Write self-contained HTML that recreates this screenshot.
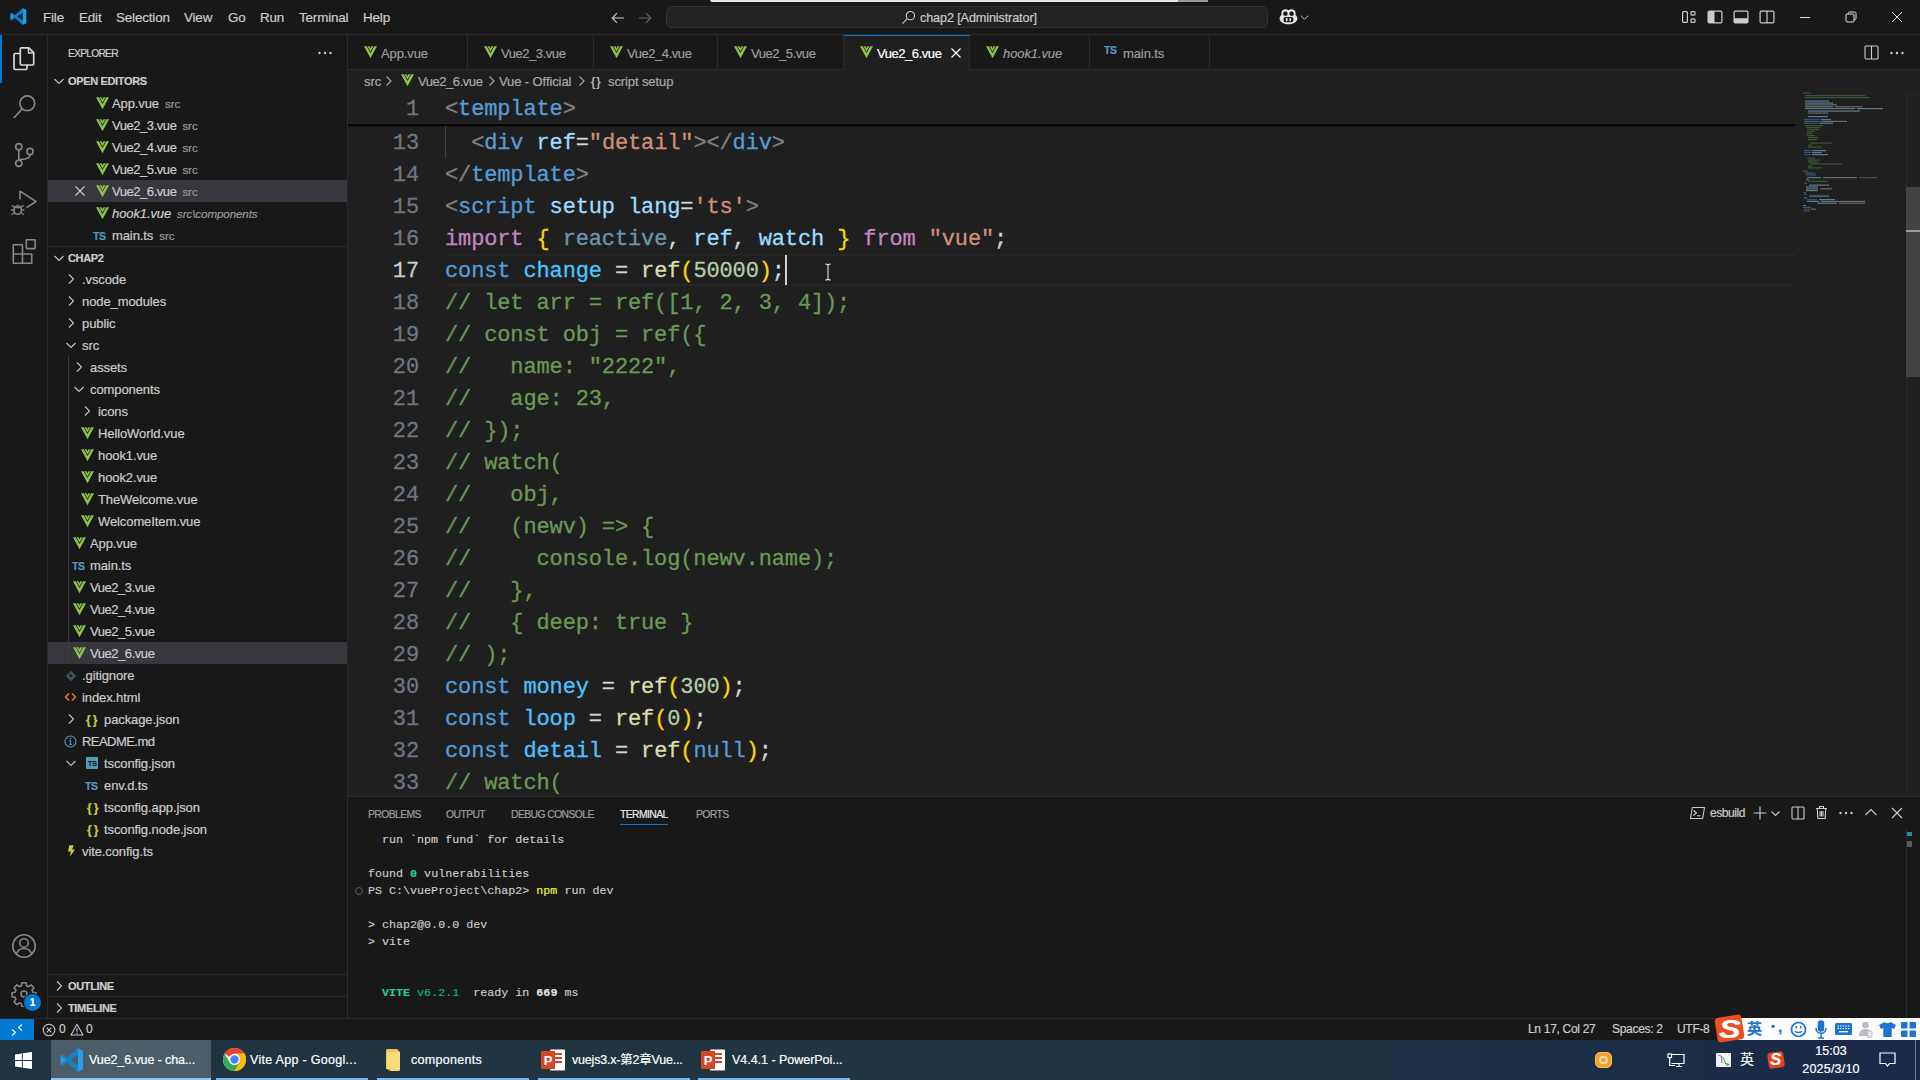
<!DOCTYPE html>
<html lang="en">
<head>
<meta charset="utf-8">
<title>Vue2_6.vue - chap2 - Visual Studio Code</title>
<style>
*{box-sizing:border-box;margin:0;padding:0}
html,body{width:1920px;height:1080px;overflow:hidden;background:#1f1f1f}
body{position:relative;font-family:"Liberation Sans","Noto Sans CJK SC",sans-serif;font-size:13px;color:#ccc;-webkit-font-smoothing:antialiased;-webkit-text-stroke:.2px}
.abs{position:absolute}
svg{display:block}
/* ---------- title bar ---------- */
#titlebar{position:absolute;left:0;top:0;width:1920px;height:35px;background:#181818;border-bottom:1px solid #2b2b2b}
#titlebar .menu{position:absolute;top:1px;height:34px;line-height:34px;font-size:13.4px;color:#ccc;white-space:nowrap;letter-spacing:-0.15px}
#cmdcenter{position:absolute;left:666px;top:6px;width:602px;height:22px;border:1px solid #333;border-radius:6px;background:#222}
#cmdcenter span{position:absolute;left:293px;top:1px;line-height:20px;font-size:12.6px;color:#ccc;white-space:nowrap;letter-spacing:-0.1px}
/* ---------- activity bar ---------- */
#activity{position:absolute;left:0;top:35px;width:48px;height:983px;background:#181818;border-right:1px solid #2b2b2b}
/* ---------- side bar ---------- */
#sidebar{position:absolute;left:48px;top:35px;width:300px;height:983px;background:#181818;border-right:1px solid #2b2b2b;overflow:hidden}
.row{position:absolute;left:0;width:299px;height:22px;line-height:22px;white-space:nowrap;font-size:13px;color:#ccc;letter-spacing:-0.1px}
.row .t{position:absolute;top:1px}
.row .d{font-size:11.6px;color:#999;margin-left:6px;letter-spacing:-0.1px}
.row svg{position:absolute}
.hdr{position:absolute;left:0;width:299px;height:22px;line-height:22px;font-size:11px;font-weight:bold;color:#ccc;white-space:nowrap}
.hdr .t{position:absolute;left:20px;top:0;letter-spacing:-0.35px}
.sel{background:#37373d}
/* ---------- editor ---------- */
#tabs{position:absolute;left:348px;top:35px;width:1572px;height:35px;background:#181818;border-bottom:1px solid #2b2b2b}
.tab{position:absolute;top:0;height:35px;border-right:1px solid #2b2b2b;line-height:35px;font-size:13px;color:#9d9d9d;white-space:nowrap;letter-spacing:-0.1px}
.tab svg{position:absolute}
.tab .t{position:absolute;top:1px}
.tab.act{background:#1f1f1f;color:#fff;border-top:1px solid #0078d4;height:36px;line-height:33px}
#crumbs{position:absolute;left:348px;top:70px;width:1572px;height:22px;line-height:22px;font-size:13px;color:#a9a9a9;white-space:nowrap;letter-spacing:-0.1px}
#crumbs .t{position:absolute;top:1px}
#crumbs svg{position:absolute}
#editor{position:absolute;left:348px;top:92px;width:1572px;height:704px;background:#1f1f1f;overflow:hidden}
.ln{position:absolute;left:0;width:1440px;height:32px;line-height:32px;white-space:pre;font-family:"Liberation Mono","DejaVu Sans Mono",monospace;font-size:22px;letter-spacing:-0.132px;-webkit-text-stroke:.3px}
.ln .n{position:absolute;left:0;top:2px;width:71px;text-align:right;color:#6e7681}
.ln .c{position:absolute;left:97px;top:2px;color:#d4d4d4}
.k{color:#569cd6}.p{color:#808080}.a{color:#9cdcfe}.s{color:#ce9178}.i{color:#c586c0}.y{color:#ffd700}.f{color:#dcdcaa}.v{color:#4fc1ff}.m{color:#b5cea8}.g{color:#6a9955}.u{color:#9cdcfe;opacity:.62}
/* ---------- panel ---------- */
#panel{position:absolute;left:348px;top:796px;width:1572px;height:222px;background:#181818;border-top:1px solid #2b2b2b;overflow:hidden}
.ptab{position:absolute;top:7px;height:21px;line-height:22px;font-size:10.400px;color:#9d9d9d;white-space:nowrap;letter-spacing:-.6px}
.tl{position:absolute;left:20px;-webkit-text-stroke:.15px;height:17px;line-height:17px;white-space:pre;font-family:"Liberation Mono","DejaVu Sans Mono",monospace;font-size:11.7px;color:#ccc}
/* ---------- status bar ---------- */
#status{position:absolute;left:0;top:1018px;width:1920px;height:22px;background:#181818;border-top:1px solid #2b2b2b;line-height:21px;font-size:12px;color:#ccc;white-space:nowrap}
#status .t{position:absolute;top:0;letter-spacing:-.3px}
/* ---------- taskbar ---------- */
#taskbar{position:absolute;left:0;top:1040px;width:1920px;height:40px;background:linear-gradient(90deg,#1f3440 0%,#203540 45%,#1e3142 70%,#19294a 100%);font-size:12px;color:#fff;white-space:nowrap}
.tb{position:absolute;top:0;height:40px;width:160px}
.tb .t{position:absolute;left:38px;top:1px;line-height:38px;font-size:12.500px;color:#fff;letter-spacing:.3px}
.tb .bar{position:absolute;left:0;right:0;bottom:0;height:2px;background:#76b9ed}
</style>
</head>
<body>
<!-- TITLEBAR -->
<div id="titlebar">
<svg class="abs" style="left:10px;top:8px" width="17" height="17" viewBox="0 0 100 100"><path d="M96 11 75 1 29 43 10 28 2 32v36l8 4 19-15 46 42 21-10z" fill="#1f9cf0"/><path d="M75 1 29 43 10 28 2 32l22 18L2 68l8 4 19-15 46 42z" fill="#0a79cf"/><path d="M75 28 45 50l30 22z" fill="#181818"/></svg>
<span class="menu" style="left:43px">File</span>
<span class="menu" style="left:79px">Edit</span>
<span class="menu" style="left:116px">Selection</span>
<span class="menu" style="left:184px">View</span>
<span class="menu" style="left:228px">Go</span>
<span class="menu" style="left:260px">Run</span>
<span class="menu" style="left:299px">Terminal</span>
<span class="menu" style="left:363px">Help</span>
<svg class="abs" style="left:610px;top:10px" width="16" height="16" viewBox="0 0 16 16" fill="none" stroke="#ccc" stroke-width="1.1"><path d="M14 8H2.5M7 3.2 2.2 8 7 12.8"/></svg>
<svg class="abs" style="left:637px;top:10px" width="16" height="16" viewBox="0 0 16 16" fill="none" stroke="#6b6b6b" stroke-width="1.1"><path d="M2 8h11.5M9 3.2 13.8 8 9 12.8"/></svg>
<div class="abs" style="left:710px;top:0;width:498px;height:2px;background:#e8e8e8;border-radius:0 0 3px 3px"></div>
<div class="abs" style="left:1178px;top:0;width:30px;height:2px;background:#999"></div>
<div id="cmdcenter"><svg class="abs" style="left:234px;top:3px" width="15" height="15" viewBox="0 0 16 16" fill="none" stroke="#ccc" stroke-width="1.2"><circle cx="10" cy="6" r="4.4"/><path d="M6.8 9.2 1.5 14.5"/></svg><span style="left:253px">chap2 [Administrator]</span></div>
<svg class="abs" style="left:1279px;top:9px" width="19" height="16" viewBox="0 0 19 16"><path d="M9.5 1.2C8.2.2 5.6-.1 3.9 1 2.3 2.1 2.2 4.3 2.5 5.8 1.3 6.9.6 8.300.6 9.600c0 1.6 1.1 3.200 3.200 4.300 1.600.800 3.600 1.300 5.700 1.300s4.100-.5 5.700-1.300c2.100-1.100 3.200-2.700 3.200-4.300 0-1.300-.7-2.700-1.900-3.800.3-1.500.2-3.700-1.400-4.800C13.400-.1 10.800.2 9.500 1.200z" fill="#e6e6e6"/><rect x="4.300" y="2.500" width="4.200" height="4.200" rx="1.500" fill="#181818"/><rect x="10.500" y="2.500" width="4.200" height="4.200" rx="1.500" fill="#181818"/><rect x="4.600" y="8" width="9.800" height="5.200" rx="1.800" fill="#181818"/><rect x="6.900" y="9" width="1.700" height="3.200" rx=".6" fill="#e6e6e6"/><rect x="10.400" y="9" width="1.700" height="3.200" rx=".6" fill="#e6e6e6"/></svg>
<svg class="abs" style="left:1300px;top:14px" width="9" height="7.400" viewBox="0 0 11 9" fill="none" stroke="#ccc" stroke-width="1.100"><path d="M1 2l4.500 4.500L10 2"/></svg>
<svg class="abs" style="left:1681px;top:10px" width="16" height="14" viewBox="0 0 16 14" fill="none" stroke="#ccc" stroke-width="1.200"><rect x="1.600" y="1.600" width="4.800" height="10.800" rx="1"/><rect x="10" y="1.600" width="4" height="3.600" rx="1"/><rect x="10" y="8.800" width="4" height="3.600" rx="1"/></svg>
<svg class="abs" style="left:1707px;top:10px" width="16" height="14" viewBox="0 0 16 14"><rect x="1.100" y="1.100" width="13.800" height="11.800" rx="1.200" fill="none" stroke="#ccc" stroke-width="1.200"/><rect x="1.100" y="1.100" width="6.400" height="11.800" fill="#ccc"/></svg>
<svg class="abs" style="left:1733px;top:10px" width="16" height="14" viewBox="0 0 16 14"><rect x="1.100" y="1.100" width="13.800" height="11.800" rx="1.200" fill="none" stroke="#ccc" stroke-width="1.200"/><rect x="1.100" y="8.200" width="13.800" height="4.700" fill="#ccc"/></svg>
<svg class="abs" style="left:1759px;top:10px" width="16" height="14" viewBox="0 0 16 14" fill="none" stroke="#ccc" stroke-width="1.200"><rect x="1.100" y="1.100" width="13.800" height="11.800" rx="1.200"/><path d="M8 1.100v11.800"/></svg>
<svg class="abs" style="left:1799px;top:11px" width="12" height="12" viewBox="0 0 12 12" stroke="#ddd" stroke-width="1"><path d="M1 6.500h10"/></svg>
<svg class="abs" style="left:1845px;top:11px" width="12" height="12" viewBox="0 0 12 12" fill="none" stroke="#ddd" stroke-width="1"><rect x="1" y="3" width="8" height="8" rx="1"/><path d="M3.300 3V2.200c0-.7.500-1.200 1.200-1.200h5.300c.7 0 1.200.5 1.200 1.200v5.300c0 .7-.5 1.200-1.200 1.200H9"/></svg>
<svg class="abs" style="left:1891px;top:11px" width="12" height="12" viewBox="0 0 12 12" stroke="#ddd" stroke-width="1"><path d="M1 1l10 10M11 1 1 11"/></svg>
</div>
<!-- ACTIVITY -->
<div id="activity">
<div class="abs" style="left:0;top:0;width:2px;height:48px;background:#0078d4"></div>
<svg class="abs" style="left:12px;top:11px" width="24" height="26" viewBox="0 0 24 26" fill="none" stroke="#d7d7d7" stroke-width="1.700" stroke-linejoin="round"><path d="M8.300 7.500H3.200a1.200 1.200 0 0 0-1.200 1.200v13.600a1.200 1.200 0 0 0 1.200 1.200h10.600a1.200 1.200 0 0 0 1.200-1.200V19"/><path d="M9.500 1.800h7.300L21.700 6.700v11.100a1.200 1.200 0 0 1-1.200 1.200H9.500a1.200 1.200 0 0 1-1.200-1.200V3a1.200 1.200 0 0 1 1.200-1.200z"/><path d="M16.500 2v5h5" stroke-width="1.400"/></svg>
<svg class="abs" style="left:11px;top:58px" width="26" height="28" viewBox="0 0 26 28" fill="none" stroke="#868686" stroke-width="1.700"><circle cx="16.300" cy="10.300" r="7.400"/><path d="M11.300 15.800 2.800 25"/></svg>
<svg class="abs" style="left:12px;top:105px" width="26" height="28" viewBox="0 0 26 28" fill="none" stroke="#868686" stroke-width="1.600"><circle cx="6.800" cy="6.700" r="3.100"/><circle cx="6.800" cy="23.300" r="3.100"/><circle cx="18" cy="11.500" r="3.100"/><path d="M6.800 9.800v10.400M18 14.600c0 3.400-3.600 4.600-7 4.600-2.300 0-4.200.3-4.200 1.600"/></svg>
<svg class="abs" style="left:9px;top:152px" width="30" height="30" viewBox="0 0 30 30" fill="none" stroke="#868686" stroke-width="1.600" stroke-linejoin="round"><path d="M11 12.500V4.200L27 14.500l-9.500 6.200"/><ellipse cx="8.700" cy="23" rx="3.700" ry="4.300"/><path d="M5.500 20.700h6.400M2 23h3M12.400 23h3M2.800 18.200l2.800 2.200M14.600 18.200l-2.800 2.200M2.800 27.800l2.800-2.300M14.600 27.800l-2.800-2.300M8.700 18.700v-1" stroke-width="1.300"/></svg>
<svg class="abs" style="left:11px;top:202px" width="26" height="28" viewBox="0 0 26 28" fill="none" stroke="#868686" stroke-width="1.600" stroke-linejoin="round"><path d="M2.300 7.800h9.200v18.400H2.300zM2.300 17h18.400v9.200H2.300M20.700 17v9.200H11.500"/><rect x="15.300" y="2.800" width="8.800" height="8.800" rx=".6"/></svg>
<svg class="abs" style="left:11px;top:898px" width="26" height="26" viewBox="0 0 26 26" fill="none" stroke="#868686" stroke-width="1.600"><circle cx="13" cy="13" r="11.200"/><circle cx="13" cy="10" r="4.300"/><path d="M5.300 21c1.300-3.700 4.200-5.500 7.700-5.500s6.400 1.800 7.700 5.500"/></svg>
<svg class="abs" style="left:11px;top:946px" width="26" height="26" viewBox="0 0 26 26" fill="none" stroke="#868686" stroke-width="1.600" stroke-linejoin="round"><path d="M11 1.800h4l.6 3.100 1.900.8 2.600-1.800 2.800 2.800-1.800 2.600.8 1.900 3.100.6v4l-3.100.6-.8 1.900 1.800 2.600-2.800 2.800-2.600-1.800-1.900.8-.6 3.100h-4l-.6-3.100-1.900-.8-2.600 1.800-2.800-2.800 1.800-2.600-.8-1.900L1 15.800v-4l3.100-.6.800-1.900L3.100 6.700l2.800-2.800 2.600 1.800 1.900-.8z"/><circle cx="13" cy="13" r="3"/></svg>
<div class="abs" style="left:24px;top:959px;width:17px;height:17px;border-radius:9px;background:#0078d4;color:#fff;font-size:10px;font-weight:bold;line-height:17px;text-align:center;box-shadow:0 0 0 1px #181818">1</div>
</div>
<!-- SIDEBAR -->
<div id="sidebar">
<span class="abs" style="left:20px;top:0;line-height:35px;font-size:10.400px;color:#ccc;letter-spacing:-.85px;top:1px" id="expl">EXPLORER</span>
<svg class="abs" style="left:269px;top:14px" width="16" height="8" viewBox="0 0 16 8" fill="#ccc"><circle cx="2.500" cy="4" r="1.200"/><circle cx="8" cy="4" r="1.200"/><circle cx="13.500" cy="4" r="1.200"/></svg>
<div class="hdr" style="top:35px"><svg style="position:absolute;left:3px;top:3px" width="16" height="16" viewBox="0 0 16 16" fill="none" stroke="#c5c5c5" stroke-width="1.100"><path d="M3.500 6l4.500 4.500L12.500 6"/></svg><span class="t">OPEN EDITORS</span></div>
<div class="row" style="top:57px"><svg style="left:48px;top:5px" width="13" height="13" viewBox="0 0 13 13"><path d="M0 .3h2.700L6.500 7 10.300.3H13L6.500 12.300z" fill="#8dc149"/><path d="M3.500.3h2L6.500 2.200 7.500.3h2L6.500 5.600z" fill="#8dc149"/></svg><span class="t" style="left:64px">App.vue<span class="d">src</span></span></div>
<div class="row" style="top:79px"><svg style="left:48px;top:5px" width="13" height="13" viewBox="0 0 13 13"><path d="M0 .3h2.700L6.500 7 10.300.3H13L6.500 12.300z" fill="#8dc149"/><path d="M3.500.3h2L6.500 2.200 7.500.3h2L6.500 5.600z" fill="#8dc149"/></svg><span class="t" style="left:64px"><span style="letter-spacing:-.45px">Vue2_3.vue</span><span class="d">src</span></span></div>
<div class="row" style="top:101px"><svg style="left:48px;top:5px" width="13" height="13" viewBox="0 0 13 13"><path d="M0 .3h2.700L6.500 7 10.300.3H13L6.500 12.300z" fill="#8dc149"/><path d="M3.500.3h2L6.500 2.200 7.500.3h2L6.500 5.600z" fill="#8dc149"/></svg><span class="t" style="left:64px"><span style="letter-spacing:-.45px">Vue2_4.vue</span><span class="d">src</span></span></div>
<div class="row" style="top:123px"><svg style="left:48px;top:5px" width="13" height="13" viewBox="0 0 13 13"><path d="M0 .3h2.700L6.500 7 10.300.3H13L6.500 12.300z" fill="#8dc149"/><path d="M3.500.3h2L6.500 2.200 7.500.3h2L6.500 5.600z" fill="#8dc149"/></svg><span class="t" style="left:64px"><span style="letter-spacing:-.45px">Vue2_5.vue</span><span class="d">src</span></span></div>
<div class="row sel" style="top:145px"><svg style="left:27px;top:6px" width="10" height="10" viewBox="0 0 10 10" stroke="#ccc" stroke-width="1.100"><path d="M.5.5l9 9M9.500.5l-9 9"/></svg><svg style="left:48px;top:5px" width="13" height="13" viewBox="0 0 13 13"><path d="M0 .3h2.700L6.500 7 10.300.3H13L6.500 12.300z" fill="#8dc149"/><path d="M3.500.3h2L6.500 2.200 7.500.3h2L6.500 5.600z" fill="#8dc149"/></svg><span class="t" style="left:64px"><span style="letter-spacing:-.45px">Vue2_6.vue</span><span class="d">src</span></span></div>
<div class="row" style="top:167px"><svg style="left:48px;top:5px" width="13" height="13" viewBox="0 0 13 13"><path d="M0 .3h2.700L6.500 7 10.300.3H13L6.500 12.300z" fill="#8dc149"/><path d="M3.500.3h2L6.500 2.200 7.500.3h2L6.500 5.600z" fill="#8dc149"/></svg><span class="t" style="left:64px;font-style:italic">hook1.vue<span class="d">src\components</span></span></div>
<div class="row" style="top:189px"><span class="t" style="left:45px;font-size:10.500px;font-weight:bold;color:#519aba;letter-spacing:-.3px">TS</span><span class="t" style="left:64px">main.ts<span class="d">src</span></span></div>
<div class="hdr" style="top:211px;border-top:1px solid #2b2b2b"><svg style="position:absolute;left:3px;top:3px" width="16" height="16" viewBox="0 0 16 16" fill="none" stroke="#c5c5c5" stroke-width="1.100"><path d="M3.500 6l4.500 4.500L12.500 6"/></svg><span class="t">CHAP2</span></div>
<div class="row" style="top:233px"><svg style="left:15px;top:3px" width="16" height="16" viewBox="0 0 16 16" fill="none" stroke="#c5c5c5" stroke-width="1.100"><path d="M6 3.500l4.500 4.500L6 12.500"/></svg><span class="t" style="left:34px">.vscode</span></div>
<div class="row" style="top:255px"><svg style="left:15px;top:3px" width="16" height="16" viewBox="0 0 16 16" fill="none" stroke="#c5c5c5" stroke-width="1.100"><path d="M6 3.500l4.500 4.500L6 12.500"/></svg><span class="t" style="left:34px">node_modules</span></div>
<div class="row" style="top:277px"><svg style="left:15px;top:3px" width="16" height="16" viewBox="0 0 16 16" fill="none" stroke="#c5c5c5" stroke-width="1.100"><path d="M6 3.500l4.500 4.500L6 12.500"/></svg><span class="t" style="left:34px">public</span></div>
<div class="row" style="top:299px"><svg style="left:15px;top:3px" width="16" height="16" viewBox="0 0 16 16" fill="none" stroke="#c5c5c5" stroke-width="1.100"><path d="M3.500 6l4.500 4.500L12.500 6"/></svg><span class="t" style="left:34px">src</span></div>
<div class="row" style="top:321px"><svg style="left:23px;top:3px" width="16" height="16" viewBox="0 0 16 16" fill="none" stroke="#c5c5c5" stroke-width="1.100"><path d="M6 3.500l4.500 4.500L6 12.500"/></svg><span class="t" style="left:42px">assets</span></div>
<div class="row" style="top:343px"><svg style="left:23px;top:3px" width="16" height="16" viewBox="0 0 16 16" fill="none" stroke="#c5c5c5" stroke-width="1.100"><path d="M3.500 6l4.500 4.500L12.500 6"/></svg><span class="t" style="left:42px">components</span></div>
<div class="row" style="top:365px"><svg style="left:31px;top:3px" width="16" height="16" viewBox="0 0 16 16" fill="none" stroke="#c5c5c5" stroke-width="1.100"><path d="M6 3.500l4.500 4.500L6 12.500"/></svg><span class="t" style="left:50px">icons</span></div>
<div class="row" style="top:387px"><svg style="left:33px;top:5px" width="13" height="13" viewBox="0 0 13 13"><path d="M0 .3h2.700L6.500 7 10.300.3H13L6.500 12.300z" fill="#8dc149"/><path d="M3.500.3h2L6.500 2.200 7.500.3h2L6.500 5.600z" fill="#8dc149"/></svg><span class="t" style="left:50px">HelloWorld.vue</span></div>
<div class="row" style="top:409px"><svg style="left:33px;top:5px" width="13" height="13" viewBox="0 0 13 13"><path d="M0 .3h2.700L6.500 7 10.300.3H13L6.500 12.300z" fill="#8dc149"/><path d="M3.500.3h2L6.500 2.200 7.500.3h2L6.500 5.600z" fill="#8dc149"/></svg><span class="t" style="left:50px">hook1.vue</span></div>
<div class="row" style="top:431px"><svg style="left:33px;top:5px" width="13" height="13" viewBox="0 0 13 13"><path d="M0 .3h2.700L6.500 7 10.300.3H13L6.500 12.300z" fill="#8dc149"/><path d="M3.500.3h2L6.500 2.200 7.500.3h2L6.500 5.600z" fill="#8dc149"/></svg><span class="t" style="left:50px">hook2.vue</span></div>
<div class="row" style="top:453px"><svg style="left:33px;top:5px" width="13" height="13" viewBox="0 0 13 13"><path d="M0 .3h2.700L6.500 7 10.300.3H13L6.500 12.300z" fill="#8dc149"/><path d="M3.500.3h2L6.500 2.200 7.500.3h2L6.500 5.600z" fill="#8dc149"/></svg><span class="t" style="left:50px">TheWelcome.vue</span></div>
<div class="row" style="top:475px"><svg style="left:33px;top:5px" width="13" height="13" viewBox="0 0 13 13"><path d="M0 .3h2.700L6.500 7 10.300.3H13L6.500 12.300z" fill="#8dc149"/><path d="M3.500.3h2L6.500 2.200 7.500.3h2L6.500 5.600z" fill="#8dc149"/></svg><span class="t" style="left:50px">WelcomeItem.vue</span></div>
<div class="row" style="top:497px"><svg style="left:25px;top:5px" width="13" height="13" viewBox="0 0 13 13"><path d="M0 .3h2.700L6.500 7 10.300.3H13L6.500 12.300z" fill="#8dc149"/><path d="M3.500.3h2L6.500 2.200 7.500.3h2L6.500 5.600z" fill="#8dc149"/></svg><span class="t" style="left:42px">App.vue</span></div>
<div class="row" style="top:519px"><span class="t" style="left:24px;font-size:10.500px;font-weight:bold;color:#519aba;letter-spacing:-.3px">TS</span><span class="t" style="left:42px">main.ts</span></div>
<div class="row" style="top:541px"><svg style="left:25px;top:5px" width="13" height="13" viewBox="0 0 13 13"><path d="M0 .3h2.700L6.500 7 10.300.3H13L6.500 12.300z" fill="#8dc149"/><path d="M3.500.3h2L6.500 2.200 7.500.3h2L6.500 5.600z" fill="#8dc149"/></svg><span class="t" style="left:42px"><span style="letter-spacing:-.45px">Vue2_3.vue</span></span></div>
<div class="row" style="top:563px"><svg style="left:25px;top:5px" width="13" height="13" viewBox="0 0 13 13"><path d="M0 .3h2.700L6.500 7 10.300.3H13L6.500 12.300z" fill="#8dc149"/><path d="M3.500.3h2L6.500 2.200 7.500.3h2L6.500 5.600z" fill="#8dc149"/></svg><span class="t" style="left:42px"><span style="letter-spacing:-.45px">Vue2_4.vue</span></span></div>
<div class="row" style="top:585px"><svg style="left:25px;top:5px" width="13" height="13" viewBox="0 0 13 13"><path d="M0 .3h2.700L6.500 7 10.300.3H13L6.500 12.300z" fill="#8dc149"/><path d="M3.500.3h2L6.500 2.200 7.500.3h2L6.500 5.600z" fill="#8dc149"/></svg><span class="t" style="left:42px"><span style="letter-spacing:-.45px">Vue2_5.vue</span></span></div>
<div class="row sel" style="top:607px"><svg style="left:25px;top:5px" width="13" height="13" viewBox="0 0 13 13"><path d="M0 .3h2.700L6.500 7 10.300.3H13L6.500 12.300z" fill="#8dc149"/><path d="M3.500.3h2L6.500 2.200 7.500.3h2L6.500 5.600z" fill="#8dc149"/></svg><span class="t" style="left:42px"><span style="letter-spacing:-.45px">Vue2_6.vue</span></span></div>
<div class="row" style="top:629px"><svg style="left:16.500px;top:6px" width="12" height="12" viewBox="0 0 12 12"><path d="M6 .8 11.200 6 6 11.200.8 6z" fill="#41535b"/><circle cx="6" cy="6" r="1.300" fill="#181818"/><path d="M4.200 3.200 6 5" stroke="#181818" stroke-width="1"/></svg><span class="t" style="left:34px">.gitignore</span></div>
<div class="row" style="top:651px"><svg style="left:16px;top:5px" width="13" height="12" viewBox="0 0 13 12" fill="none" stroke="#e37933" stroke-width="1.500"><path d="M5 2.500 1.500 6 5 9.500M8 2.500 11.500 6 8 9.500"/></svg><span class="t" style="left:34px">index.html</span></div>
<div class="row" style="top:673px"><svg style="left:15px;top:3px" width="16" height="16" viewBox="0 0 16 16" fill="none" stroke="#c5c5c5" stroke-width="1.100"><path d="M6 3.500l4.500 4.500L6 12.500"/></svg><span class="t" style="left:38px;font-size:12px;font-weight:bold;color:#cbcb41;letter-spacing:2px">{}</span><span class="t" style="left:56px">package.json</span></div>
<div class="row" style="top:695px"><svg style="left:15.500px;top:5px" width="13" height="13" viewBox="0 0 13 13" fill="none" stroke="#519aba" stroke-width="1.100"><circle cx="6.500" cy="6.500" r="5.500"/><path d="M6.500 5.500v4M5.300 5.500h1.200M5.200 9.500h2.600" stroke-width="1.200"/><circle cx="6.500" cy="3.500" r=".8" fill="#519aba" stroke="none"/></svg><span class="t" style="left:34px"><span style="letter-spacing:-.55px">README.md</span></span></div>
<div class="row" style="top:717px"><svg style="left:15px;top:3px" width="16" height="16" viewBox="0 0 16 16" fill="none" stroke="#c5c5c5" stroke-width="1.100"><path d="M3.500 6l4.500 4.500L12.500 6"/></svg><svg style="left:38px;top:5px" width="12" height="12" viewBox="0 0 12 12"><rect width="12" height="12" rx="1" fill="#519aba"/></svg><span class="t" style="left:40px;font-size:7px;font-weight:bold;color:#181818;top:1px">TS</span><span class="t" style="left:56px">tsconfig.json</span></div>
<div class="row" style="top:739px"><span class="t" style="left:37px;font-size:10.500px;font-weight:bold;color:#519aba;letter-spacing:-.3px">TS</span><span class="t" style="left:56px">env.d.ts</span></div>
<div class="row" style="top:761px"><span class="t" style="left:39px;font-size:12px;font-weight:bold;color:#cbcb41;letter-spacing:2px">{}</span><span class="t" style="left:56px">tsconfig.app.json</span></div>
<div class="row" style="top:783px"><span class="t" style="left:39px;font-size:12px;font-weight:bold;color:#cbcb41;letter-spacing:2px">{}</span><span class="t" style="left:56px">tsconfig.node.json</span></div>
<div class="row" style="top:805px"><svg style="left:19px;top:4px" width="9" height="14" viewBox="0 0 10 14"><path d="M2.500.5h4.800L5.800 5.200h3L3.200 13.500 4.400 7.600H1.200z" fill="#cbcb41"/></svg><span class="t" style="left:34px">vite.config.ts</span></div>
<div class="abs" style="left:20px;top:321px;width:1px;height:308px;background:#3c3c3c"></div>
<div class="hdr" style="top:939px;border-top:1px solid #2b2b2b"><svg style="position:absolute;left:3px;top:3px" width="16" height="16" viewBox="0 0 16 16" fill="none" stroke="#c5c5c5" stroke-width="1.100"><path d="M6 3.500l4.500 4.500L6 12.500"/></svg><span class="t">OUTLINE</span></div>
<div class="hdr" style="top:961px;border-top:1px solid #2b2b2b"><svg style="position:absolute;left:3px;top:3px" width="16" height="16" viewBox="0 0 16 16" fill="none" stroke="#c5c5c5" stroke-width="1.100"><path d="M6 3.500l4.500 4.500L6 12.500"/></svg><span class="t">TIMELINE</span></div>
</div>
<!-- TABS -->
<div id="tabs">
<div class="tab" style="left:0px;width:120px"><svg style="left:16px;top:11px" width="13" height="13" viewBox="0 0 13 13"><path d="M0 .3h2.700L6.500 7 10.300.3H13L6.500 12.300z" fill="#8dc149"/><path d="M3.500.3h2L6.500 2.200 7.500.3h2L6.500 5.600z" fill="#8dc149"/></svg><span class="t" style="left:33px">App.vue</span></div>
<div class="tab" style="left:120px;width:126px"><svg style="left:16px;top:11px" width="13" height="13" viewBox="0 0 13 13"><path d="M0 .3h2.700L6.500 7 10.300.3H13L6.500 12.300z" fill="#8dc149"/><path d="M3.500.3h2L6.500 2.200 7.500.3h2L6.500 5.600z" fill="#8dc149"/></svg><span class="t" style="left:33px"><span style="letter-spacing:-.45px">Vue2_3.vue</span></span></div>
<div class="tab" style="left:246px;width:124px"><svg style="left:16px;top:11px" width="13" height="13" viewBox="0 0 13 13"><path d="M0 .3h2.700L6.500 7 10.300.3H13L6.500 12.300z" fill="#8dc149"/><path d="M3.500.3h2L6.500 2.200 7.500.3h2L6.500 5.600z" fill="#8dc149"/></svg><span class="t" style="left:33px"><span style="letter-spacing:-.45px">Vue2_4.vue</span></span></div>
<div class="tab" style="left:370px;width:126px"><svg style="left:16px;top:11px" width="13" height="13" viewBox="0 0 13 13"><path d="M0 .3h2.700L6.500 7 10.300.3H13L6.500 12.300z" fill="#8dc149"/><path d="M3.500.3h2L6.500 2.200 7.500.3h2L6.500 5.600z" fill="#8dc149"/></svg><span class="t" style="left:33px"><span style="letter-spacing:-.45px">Vue2_5.vue</span></span></div>
<div class="tab act" style="left:496px;width:126px"><svg style="left:16px;top:10px" width="13" height="13" viewBox="0 0 13 13"><path d="M0 .3h2.700L6.500 7 10.300.3H13L6.500 12.300z" fill="#8dc149"/><path d="M3.500.3h2L6.500 2.200 7.500.3h2L6.500 5.600z" fill="#8dc149"/></svg><span class="t" style="left:33px"><span style="letter-spacing:-.45px">Vue2_6.vue</span></span><svg style="left:107px;top:12px" width="10" height="10" viewBox="0 0 10 10" stroke="#fff" stroke-width="1.200"><path d="M.5.500l9 9M9.500.5l-9 9"/></svg></div>
<div class="tab" style="left:622px;width:120px"><svg style="left:16px;top:11px" width="13" height="13" viewBox="0 0 13 13"><path d="M0 .3h2.700L6.500 7 10.300.3H13L6.500 12.300z" fill="#8dc149"/><path d="M3.500.3h2L6.500 2.200 7.500.3h2L6.500 5.600z" fill="#8dc149"/></svg><span class="t" style="left:33px;font-style:italic">hook1.vue</span></div>
<div class="tab" style="left:742px;width:120px"><span class="t" style="left:14px;font-size:10.500px;font-weight:bold;color:#519aba;letter-spacing:-.3px;top:-2px">TS</span><span class="t" style="left:33px">main.ts</span></div>
<svg class="abs" style="left:1516px;top:10px" width="15" height="15" viewBox="0 0 15 15" fill="none" stroke="#ccc" stroke-width="1.100"><rect x="1" y="1" width="13" height="13" rx="1"/><path d="M7.500 1v13"/></svg>
<svg class="abs" style="left:1541px;top:14px" width="16" height="8" viewBox="0 0 16 8" fill="#ccc"><circle cx="2.500" cy="4" r="1.200"/><circle cx="8" cy="4" r="1.200"/><circle cx="13.500" cy="4" r="1.200"/></svg>
</div>
<!-- CRUMBS -->
<div id="crumbs">
<span class="t" style="left:16px">src</span>
<svg style="left:36px;top:5px" width="10" height="12" viewBox="0 0 10 12" fill="none" stroke="#a9a9a9" stroke-width="1.100"><path d="M2.500 1.500 7 6 2.500 10.500"/></svg>
<svg style="left:53px;top:4px" width="13" height="13" viewBox="0 0 13 13"><path d="M0 .3h2.700L6.500 7 10.300.3H13L6.500 12.300z" fill="#8dc149"/><path d="M3.500.3h2L6.500 2.200 7.500.3h2L6.500 5.600z" fill="#8dc149"/></svg>
<span class="t" style="left:70px"><span style="letter-spacing:-.45px">Vue2_6.vue</span></span>
<svg style="left:139px;top:5px" width="10" height="12" viewBox="0 0 10 12" fill="none" stroke="#a9a9a9" stroke-width="1.100"><path d="M2.500 1.500 7 6 2.500 10.500"/></svg>
<span class="t" style="left:151px">Vue - Official</span>
<svg style="left:229px;top:5px" width="10" height="12" viewBox="0 0 10 12" fill="none" stroke="#a9a9a9" stroke-width="1.100"><path d="M2.500 1.500 7 6 2.500 10.500"/></svg>
<span class="t" style="left:243px;color:#ccc;letter-spacing:.8px">{}</span>
<span class="t" style="left:260px">script setup</span>
</div>
<!-- EDITOR -->
<div id="editor">
<div class="abs" style="left:98px;top:162px;width:1349px;height:32px;border-top:2px solid #252525;border-bottom:2px solid #252525"></div>
<div class="abs" style="left:97px;top:34px;width:1px;height:32px;background:#404040"></div>
<div class="ln" style="top:34px"><span class="n">13</span><span class="c">  <span class="p">&lt;</span><span class="k">div</span> <span class="a">ref</span>=<span class="s">"detail"</span><span class="p">&gt;&lt;/</span><span class="k">div</span><span class="p">&gt;</span></span></div>
<div class="ln" style="top:66px"><span class="n">14</span><span class="c"><span class="p">&lt;/</span><span class="k">template</span><span class="p">&gt;</span></span></div>
<div class="ln" style="top:98px"><span class="n">15</span><span class="c"><span class="p">&lt;</span><span class="k">script</span> <span class="a">setup</span> <span class="a">lang</span>=<span class="s">'ts'</span><span class="p">&gt;</span></span></div>
<div class="ln" style="top:130px"><span class="n">16</span><span class="c"><span class="i">import</span> <span class="y">{</span> <span class="u">reactive</span>, <span class="a">ref</span>, <span class="a">watch</span> <span class="y">}</span> <span class="i">from</span> <span class="s">"vue"</span>;</span></div>
<div class="ln" style="top:162px"><span class="n" style="color:#ccc">17</span><span class="c"><span class="k">const</span> <span class="v">change</span> = <span class="f">ref</span><span class="y">(</span><span class="m">50000</span><span class="y">)</span>;</span></div>
<div class="ln" style="top:194px"><span class="n">18</span><span class="c"><span class="g">// let arr = ref([1, 2, 3, 4]);</span></span></div>
<div class="ln" style="top:226px"><span class="n">19</span><span class="c"><span class="g">// const obj = ref({</span></span></div>
<div class="ln" style="top:258px"><span class="n">20</span><span class="c"><span class="g">//   name: "2222",</span></span></div>
<div class="ln" style="top:290px"><span class="n">21</span><span class="c"><span class="g">//   age: 23,</span></span></div>
<div class="ln" style="top:322px"><span class="n">22</span><span class="c"><span class="g">// });</span></span></div>
<div class="ln" style="top:354px"><span class="n">23</span><span class="c"><span class="g">// watch(</span></span></div>
<div class="ln" style="top:386px"><span class="n">24</span><span class="c"><span class="g">//   obj,</span></span></div>
<div class="ln" style="top:418px"><span class="n">25</span><span class="c"><span class="g">//   (newv) =&gt; {</span></span></div>
<div class="ln" style="top:450px"><span class="n">26</span><span class="c"><span class="g">//     console.log(newv.name);</span></span></div>
<div class="ln" style="top:482px"><span class="n">27</span><span class="c"><span class="g">//   },</span></span></div>
<div class="ln" style="top:514px"><span class="n">28</span><span class="c"><span class="g">//   { deep: true }</span></span></div>
<div class="ln" style="top:546px"><span class="n">29</span><span class="c"><span class="g">// );</span></span></div>
<div class="ln" style="top:578px"><span class="n">30</span><span class="c"><span class="k">const</span> <span class="v">money</span> = <span class="f">ref</span><span class="y">(</span><span class="m">300</span><span class="y">)</span>;</span></div>
<div class="ln" style="top:610px"><span class="n">31</span><span class="c"><span class="k">const</span> <span class="v">loop</span> = <span class="f">ref</span><span class="y">(</span><span class="m">0</span><span class="y">)</span>;</span></div>
<div class="ln" style="top:642px"><span class="n">32</span><span class="c"><span class="k">const</span> <span class="v">detail</span> = <span class="f">ref</span><span class="y">(</span><span class="k">null</span><span class="y">)</span>;</span></div>
<div class="ln" style="top:674px"><span class="n">33</span><span class="c"><span class="g">// watch(</span></span></div>
<div class="abs" style="left:436.500px;top:163px;width:2px;height:30px;background:#d0d0d0"></div>
<svg class="abs" style="left:475.500px;top:171px" width="8" height="18" viewBox="0 0 9 20" fill="none" stroke="#e8e8e8" stroke-width="1.200"><path d="M4.500 2v16M1.500 1c1.500 0 3 .4 3 1.500C4.500 1.400 6 1 7.500 1M1.500 19c1.500 0 3-.4 3-1.500 0 1.100 1.500 1.500 3 1.500"/></svg>
<div class="abs" style="left:0;top:0;width:1447px;height:32px;background:#1f1f1f;border-bottom:1px solid #262626;box-shadow:0 2px 0 0 #050505,0 3px 1px 0 rgba(0,0,0,.2)"></div>
<div class="ln" style="top:0"><span class="n">1</span><span class="c"><span class="p">&lt;</span><span class="k">template</span><span class="p">&gt;</span></span></div>
<div class="abs" style="left:1558px;top:0;width:14px;height:704px;background:#212121;border-left:1px solid #2a2a2a"></div>
<div class="abs" style="left:1558px;top:95px;width:14px;height:190px;background:#434343"></div>
<div class="abs" style="left:1558px;top:138px;width:14px;height:2px;background:#9a9a9a"></div>
<svg class="abs" style="left:1455px;top:0" width="100" height="130" viewBox="0 0 100 130" opacity=".62"><rect x="0" y="0.5" width="8" height="1.200" fill="#3f76a8"/><rect x="2" y="3.0" width="60" height="1.200" fill="#4f7a3e"/><rect x="2" y="5.0" width="62" height="1.200" fill="#4f7a3e"/><rect x="64" y="5.0" width="3" height="1.200" fill="#4f7a3e"/><rect x="2" y="8.5" width="24" height="1.200" fill="#7fb4d6"/><rect x="2" y="10.5" width="28" height="1.200" fill="#7fb4d6"/><rect x="2" y="12.3" width="32" height="1.200" fill="#9a9a9a"/><rect x="2" y="14.2" width="28" height="1.200" fill="#7fb4d6"/><rect x="32" y="14.2" width="27" height="1.200" fill="#9a9a9a"/><rect x="2" y="16.0" width="50" height="1.200" fill="#9a9a9a"/><rect x="54" y="16.0" width="26" height="1.200" fill="#7fb4d6"/><rect x="5" y="18.5" width="52" height="1.200" fill="#7fb4d6"/><rect x="5" y="20.5" width="20" height="1.200" fill="#9a9a9a"/><rect x="5" y="24.0" width="20" height="1.200" fill="#7fb4d6"/><rect x="1" y="27.0" width="16" height="1.200" fill="#3f76a8"/><rect x="18" y="27.0" width="10" height="1.200" fill="#7fb4d6"/><rect x="1" y="28.8" width="16" height="1.200" fill="#3f76a8"/><rect x="18" y="28.8" width="26" height="1.200" fill="#9a9a9a"/><rect x="1" y="30.6" width="14" height="1.200" fill="#3f76a8"/><rect x="16" y="30.6" width="14" height="1.200" fill="#7fb4d6"/><rect x="2" y="33.0" width="18" height="1.200" fill="#4f7a3e"/><rect x="3" y="35.0" width="14" height="1.200" fill="#4f7a3e"/><rect x="4" y="37.0" width="12" height="1.200" fill="#4f7a3e"/><rect x="4" y="39.0" width="8" height="1.200" fill="#4f7a3e"/><rect x="3" y="41.0" width="6" height="1.200" fill="#4f7a3e"/><rect x="4" y="43.0" width="8" height="1.200" fill="#4f7a3e"/><rect x="5" y="45.0" width="10" height="1.200" fill="#4f7a3e"/><rect x="5" y="47.0" width="9" height="1.200" fill="#4f7a3e"/><rect x="7" y="50.5" width="22" height="1.200" fill="#4f7a3e"/><rect x="5" y="52.5" width="4" height="1.200" fill="#4f7a3e"/><rect x="5" y="54.5" width="14" height="1.200" fill="#4f7a3e"/><rect x="1" y="58.0" width="7" height="1.200" fill="#3f76a8"/><rect x="9" y="58.0" width="14" height="1.200" fill="#7fb4d6"/><rect x="1" y="60.0" width="7" height="1.200" fill="#3f76a8"/><rect x="9" y="60.0" width="10" height="1.200" fill="#7fb4d6"/><rect x="1" y="62.0" width="7" height="1.200" fill="#3f76a8"/><rect x="9" y="62.0" width="16" height="1.200" fill="#7fb4d6"/><rect x="4" y="65.5" width="8" height="1.200" fill="#4f7a3e"/><rect x="5" y="67.5" width="12" height="1.200" fill="#4f7a3e"/><rect x="5" y="69.5" width="10" height="1.200" fill="#4f7a3e"/><rect x="7" y="71.3" width="32" height="1.200" fill="#4f7a3e"/><rect x="5" y="73.5" width="4" height="1.200" fill="#4f7a3e"/><rect x="5" y="75.3" width="14" height="1.200" fill="#4f7a3e"/><rect x="0" y="78.5" width="5" height="1.200" fill="#8a5f88"/><rect x="2" y="80.5" width="10" height="1.200" fill="#3f76a8"/><rect x="3" y="82.3" width="10" height="1.200" fill="#3f76a8"/><rect x="4" y="85.0" width="14" height="1.200" fill="#7fb4d6"/><rect x="20" y="85.0" width="34" height="1.200" fill="#9a9a9a"/><rect x="56" y="85.0" width="18" height="1.200" fill="#4f7a3e"/><rect x="3" y="87.0" width="3" height="1.200" fill="#9a9a9a"/><rect x="5" y="88.7" width="20" height="1.200" fill="#4f7a3e"/><rect x="1" y="90.6" width="3" height="1.200" fill="#3f76a8"/><rect x="6" y="92.5" width="20" height="1.200" fill="#7fb4d6"/><rect x="3" y="94.3" width="12" height="1.200" fill="#7fb4d6"/><rect x="3" y="96.2" width="12" height="1.200" fill="#7fb4d6"/><rect x="17" y="96.2" width="12" height="1.200" fill="#9a9a9a"/><rect x="3" y="98.0" width="12" height="1.200" fill="#7fb4d6"/><rect x="0" y="100.0" width="3" height="1.200" fill="#3f76a8"/><rect x="1" y="101.8" width="3" height="1.200" fill="#3f76a8"/><rect x="6" y="103.5" width="20" height="1.200" fill="#7fb4d6"/><rect x="1" y="105.3" width="3" height="1.200" fill="#9a9a9a"/><rect x="4" y="107.0" width="10" height="1.200" fill="#3f76a8"/><rect x="16" y="107.0" width="16" height="1.200" fill="#7fb4d6"/><rect x="4" y="108.8" width="12" height="1.200" fill="#7fb4d6"/><rect x="18" y="108.8" width="44" height="1.200" fill="#9a9a9a"/><rect x="14" y="110.6" width="20" height="1.200" fill="#7fb4d6"/><rect x="36" y="110.6" width="26" height="1.200" fill="#9a9a9a"/><rect x="0" y="113.0" width="3" height="1.200" fill="#9a9a9a"/><rect x="0" y="114.8" width="8" height="1.200" fill="#3f76a8"/><rect x="1" y="116.6" width="6" height="1.200" fill="#3f76a8"/><rect x="8" y="116.6" width="5" height="1.200" fill="#9a9a9a"/><rect x="0" y="118.4" width="7" height="1.200" fill="#3f76a8"/></svg>
</div>
<!-- PANEL -->
<div id="panel">
<span class="ptab" style="left:20px">PROBLEMS</span>
<span class="ptab" style="left:98px">OUTPUT</span>
<span class="ptab" style="left:163px">DEBUG CONSOLE</span>
<span class="ptab" style="left:272px;color:#e7e7e7;border-bottom:1px solid #0078d4">TERMINAL</span>
<span class="ptab" style="left:348px">PORTS</span>
<div class="tl" style="top:35px;left:20px">  run `npm fund` for details</div>
<div class="tl" style="top:69px;left:20px">found <b style="color:#23d18b">0</b> vulnerabilities</div>
<div class="tl" style="top:86px;left:20px">PS C:\vueProject\chap2&gt; <span style="color:#f5f543">npm</span> run dev</div>
<div class="tl" style="top:120px;left:20px">&gt; chap2@0.0.0 dev</div>
<div class="tl" style="top:137px;left:20px">&gt; vite</div>
<div class="tl" style="top:188px;left:20px">  <b style="color:#23d18b">VITE</b> <span style="color:#12b377">v6.2.1</span>  ready in <b style="color:#e5e5e5">669</b> ms</div>
<div class="abs" style="left:7px;top:90px;width:8px;height:8px;border-radius:4px;border:1.500px solid #5a5a5a"></div>
<svg class="abs" style="left:1341px;top:8px" width="17" height="16" viewBox="0 0 17 16" fill="none" stroke="#ccc" stroke-width="1.100" stroke-linejoin="round"><path d="M3.300 2.500h12.200l-1.800 11H1.500z"/><path d="M4.800 5.500 7.500 8 4.300 10.500M8 10.800h3.500"/></svg>
<span class="abs" style="left:1362px;top:5px;line-height:22px;font-size:12px;color:#ccc;letter-spacing:-.45px">esbuild</span>
<svg class="abs" style="left:1404px;top:8px" width="16" height="16" viewBox="0 0 16 16" stroke="#ccc" stroke-width="1.100"><path d="M8 1.500v13M1.500 8h13"/></svg>
<svg class="abs" style="left:1422px;top:12px" width="11" height="9" viewBox="0 0 11 9" fill="none" stroke="#ccc" stroke-width="1.100"><path d="M1.500 2.500l4 4 4-4"/></svg>
<svg class="abs" style="left:1443px;top:9px" width="14" height="14" viewBox="0 0 14 14" fill="none" stroke="#ccc" stroke-width="1.100"><rect x="1" y="1" width="12" height="12" rx="1"/><path d="M7 1v12"/></svg>
<svg class="abs" style="left:1467px;top:8px" width="13" height="15" viewBox="0 0 13 15" fill="none" stroke="#ccc" stroke-width="1.100"><path d="M1 3.500h11M4.500 3.500V1.500h4v2M2.300 3.500l.5 10h7.400l.5-10M5 6v5.500M6.500 6v5.500M8 6v5.500"/></svg>
<svg class="abs" style="left:1490px;top:12px" width="16" height="8" viewBox="0 0 16 8" fill="#ccc"><circle cx="2.500" cy="4" r="1.200"/><circle cx="8" cy="4" r="1.200"/><circle cx="13.500" cy="4" r="1.200"/></svg>
<svg class="abs" style="left:1516px;top:10px" width="14" height="10" viewBox="0 0 14 10" fill="none" stroke="#ccc" stroke-width="1.100"><path d="M1.500 8 7 2.500 12.500 8"/></svg>
<svg class="abs" style="left:1543px;top:10px" width="12" height="12" viewBox="0 0 12 12" stroke="#ccc" stroke-width="1.100"><path d="M1 1l10 10M11 1 1 11"/></svg>
<div class="abs" style="left:1558px;top:32px;width:1px;height:190px;background:#2b2b2b"></div>
<div class="abs" style="left:1559px;top:35px;width:5px;height:4px;background:#2b8a9e"></div>
<div class="abs" style="left:1559px;top:44px;width:5px;height:6px;background:#5a5a5a"></div>
</div>
<!-- STATUS -->
<div id="status">
<div class="abs" style="left:0;top:0;width:34px;height:21px;background:#0078d4"></div>
<svg class="abs" style="left:11px;top:5px" width="12" height="12" viewBox="0 0 12 12" fill="none" stroke="#fff" stroke-width="1.100"><path d="M1 5.500 4.500 8.500 1 11.500M11 .5 7.500 3.500 11 6.500"/></svg>
<svg class="abs" style="left:42px;top:4px" width="14" height="14" viewBox="0 0 14 14" fill="none" stroke="#ccc" stroke-width="1.100"><circle cx="7" cy="7" r="5.800"/><path d="M4.700 4.700l4.600 4.600M9.300 4.700 4.700 9.300"/></svg>
<span class="t" style="left:59px">0</span>
<svg class="abs" style="left:70px;top:4px" width="14" height="13" viewBox="0 0 14 13" fill="none" stroke="#ccc" stroke-width="1.100" stroke-linejoin="round"><path d="M7 1.200 13 12H1z"/><path d="M7 5v3.800M7 9.800v1.200"/></svg>
<span class="t" style="left:86px">0</span>
<span class="t" style="left:1528px">Ln 17, Col 27</span>
<span class="t" style="left:1612px">Spaces: 2</span>
<span class="t" style="left:1677px">UTF-8</span>
</div>
<!-- TASKBAR -->
<div id="taskbar">
<svg class="abs" style="left:15px;top:12px" width="17" height="17" viewBox="0 0 17 17" fill="#fff"><path d="M0 2.400 6.900 1.400v6.700H0zM7.800 1.300 17 0v8.100H7.800zM0 8.900h6.900v6.700L0 14.600zM7.800 8.900H17V17l-9.200-1.300z"/></svg>
<div class="tb" style="left:51px;background:#4b5d66"><div class="bar" style="background:#8cc4ee"></div><svg class="abs" style="left:9px;top:8px" width="24" height="24" viewBox="0 0 100 100"><path d="M96 11 75 1 29 43 10 28 2 32v36l8 4 19-15 46 42 21-10z" fill="#2b9fea"/><path d="M75 1 29 43 10 28 2 32l22 18L2 68l8 4 19-15 46 42z" fill="#1a7fc9"/><path d="M75 28 45 50l30 22z" fill="#4b5d66"/></svg><span class="t" style="letter-spacing:-.1px">Vue2_6.vue - cha...</span></div>
<div class="tb" style="left:212px"><div class="bar" style="left:4px;right:4px"></div><svg class="abs" style="left:10px;top:7px" width="25" height="25" viewBox="0 0 48 48"><circle cx="24" cy="24" r="22" fill="#fff"/><path d="M24 2a22 22 0 0 1 19.050 11H24a11 11 0 0 0-9.530 5.500L5 13A22 22 0 0 1 24 2z" fill="#ea4335"/><path d="M43.050 13A22 22 0 0 1 24 46l9.530-16.500A11 11 0 0 0 33.530 18.500L43.050 13z" fill="#fbbc04"/><path d="M43.050 13H24a11 11 0 0 1 9.530 16.500L24 46A22 22 0 0 0 43.050 13z" fill="#fbbc04"/><path d="M5 13a22 22 0 0 0 19 33l9.530-16.500A11 11 0 0 1 14.470 29.500z" fill="#34a853"/><circle cx="24" cy="24" r="10" fill="#fff"/><circle cx="24" cy="24" r="8" fill="#4285f4"/></svg><span class="t">Vite App - Googl...</span></div>
<div class="tb" style="left:373px"><div class="bar" style="left:4px;right:4px"></div><svg class="abs" style="left:13px;top:9px" width="15" height="22" viewBox="0 0 15 22"><path d="M0 1.500C0 .7.700 0 1.500 0H11l2.500 2.500V20H0z" fill="#e9c456"/><path d="M1 3h13v17.500c0 .8-.7 1.500-1.500 1.500H4.500L1 20z" fill="#f7dc7d"/><path d="M1 20h3.500v2z" fill="#c9a13a"/></svg><span class="t">components</span></div>
<div class="tb" style="left:534px"><div class="bar" style="left:4px;right:4px"></div><svg class="abs" style="left:7px;top:8px" width="25" height="24" viewBox="0 0 25 24"><rect x="9" y="1.500" width="15" height="21" rx="1" fill="#fff"/><path d="M12 6h9M12 10h9M12 14h9" stroke="#d24726" stroke-width="2"/><rect x="0" y="3" width="14" height="18" fill="#d24726"/><text x="7" y="17" font-family="Liberation Sans,sans-serif" font-size="13" font-weight="bold" fill="#fff" text-anchor="middle">P</text></svg><span class="t" style="letter-spacing:-.2px">vuejs3.x-第2章Vue...</span></div>
<div class="tb" style="left:694px"><div class="bar" style="left:4px;right:4px"></div><svg class="abs" style="left:7px;top:8px" width="25" height="24" viewBox="0 0 25 24"><rect x="9" y="1.500" width="15" height="21" rx="1" fill="#fff"/><path d="M12 6h9M12 10h9M12 14h9" stroke="#d24726" stroke-width="2"/><rect x="0" y="3" width="14" height="18" fill="#d24726"/><text x="7" y="17" font-family="Liberation Sans,sans-serif" font-size="13" font-weight="bold" fill="#fff" text-anchor="middle">P</text></svg><span class="t" style="letter-spacing:-.03px">V4.4.1 - PowerPoi...</span></div>
<div class="abs" style="left:1595px;top:12px;width:17px;height:16px;border-radius:5px;background:#f0a030;border:1px solid #f7c060"></div><div class="abs" style="left:1599px;top:16px;width:9px;height:8px;border-radius:4px;border:2px solid #fbe0a8"></div>
<svg class="abs" style="left:1667px;top:13px" width="18" height="15" viewBox="0 0 18 15" fill="none" stroke="#fff" stroke-width="1.200"><path d="M4.500 1.500h12.500v9H4.500M9 13.500h6M12 10.500v3"/><rect x="1" y="1" width="3.500" height="3.500"/><path d="M2.700 4.500v8H8"/></svg>
<div class="abs" style="left:1716px;top:13px;width:15px;height:14px;background:#f2f2f2;border-radius:1px"></div><svg class="abs" style="left:1717px;top:14px" width="14" height="13" viewBox="0 0 14 13" fill="none" stroke="#5a7d8c" stroke-width="1"><path d="M1.500 1.500c3 0 5 2 6 5l1.500 4M4 3c1 2 1 4 .5 6"/><path d="M9.500 8.500v4l3.500-2z" fill="#4caf50" stroke="none"/></svg>
<span class="abs" style="left:1740px;top:0;line-height:39px;font-size:14px;color:#fff">英</span>
<div class="abs" style="left:1768px;top:12px;width:16px;height:16px;border-radius:3px;background:#e8401c;transform:rotate(-8deg)"></div><span class="abs" style="left:1770px;top:9px;font-size:17px;line-height:22px;font-weight:bold;font-style:italic;color:#fff">S</span>
<span class="abs" style="left:1802px;top:2px;width:58px;text-align:center;line-height:18px;font-size:12.500px;color:#fff">15:03</span>
<span class="abs" style="left:1800px;top:20px;width:62px;text-align:center;line-height:18px;font-size:12.500px;letter-spacing:.2px;color:#fff">2025/3/10</span>
<svg class="abs" style="left:1879px;top:12px" width="17" height="16" viewBox="0 0 17 16" fill="none" stroke="#fff" stroke-width="1.200"><path d="M1 1h15v10.500h-5.500L8.500 14l-2-2.500H1z"/></svg>
<div class="abs" style="left:1915px;top:0;width:1px;height:40px;background:#6f7b8a"></div>
</div>
<div class="abs" style="left:1738px;top:1018px;width:182px;height:22px;background:#fdfdfd"></div>
<div class="abs" style="left:1716px;top:1016px;width:27px;height:25px;border-radius:4px;background:#ee4d1f;transform:rotate(-9deg)"></div><span class="abs" style="left:1719px;top:1012px;font-size:26px;line-height:34px;font-weight:bold;font-style:italic;color:#fff;transform:scaleX(1.250);transform-origin:left center">S</span>
<span class="abs" style="left:1747px;top:1018px;line-height:21px;font-size:15px;font-weight:bold;color:#1e73d2">英</span>
<span class="abs" style="left:1771px;top:1016px;line-height:21px;font-size:11px;font-weight:bold;color:#1e73d2">•</span><span class="abs" style="left:1778px;top:1016px;line-height:21px;font-size:15px;font-weight:bold;color:#1e73d2">,</span>
<svg class="abs" style="left:1790px;top:1021px" width="17" height="17" viewBox="0 0 17 17" fill="none" stroke="#1e73d2" stroke-width="1.700"><circle cx="8.500" cy="8.500" r="7"/><path d="M5 10c1 2 6 2 7 0" stroke-width="1.300"/><path d="M6.300 5v2.500M10.700 5v2.500" stroke-width="1.500"/></svg>
<svg class="abs" style="left:1815px;top:1020px" width="12" height="19" viewBox="0 0 12 19" fill="none" stroke="#1e73d2" stroke-width="1.500"><rect x="3.500" y="1" width="5" height="10" rx="2.500" fill="#1e73d2"/><path d="M1 8c0 7 10 7 10 0M6 13.500v4M3 18h6"/></svg>
<svg class="abs" style="left:1835px;top:1023px" width="17" height="12" viewBox="0 0 17 12"><rect width="17" height="12" rx="1.500" fill="#1e73d2"/><path d="M2.500 3h12M2.500 5.500h12" stroke="#fff" stroke-width="1.200" stroke-dasharray="1.500 1.100"/><path d="M4 8.700h9" stroke="#fff" stroke-width="1.300"/></svg>
<svg class="abs" style="left:1859px;top:1021px" width="14" height="17" viewBox="0 0 14 17" fill="#b9bcc4"><circle cx="6.500" cy="4" r="3.300"/><path d="M0 15c0-5 3-7 6.500-7S13 10 13 15z"/><rect x="8.500" y="10" width="4.500" height="6.500" rx="1" fill="#e4e6ea" stroke="#b9bcc4" stroke-width=".8"/></svg>
<svg class="abs" style="left:1879px;top:1022px" width="17" height="15" viewBox="0 0 17 15" fill="#1e73d2"><path d="M5.500 0c1 1.600 5 1.600 6 0L17 3l-2 4-2.300-1V15H4.300V6L2 7 0 3z"/></svg>
<svg class="abs" style="left:1901px;top:1022px" width="15" height="15" viewBox="0 0 15 15" fill="#1e73d2"><rect width="6.500" height="6.500" rx="1"/><rect x="8.500" width="6.500" height="6.500" rx="1"/><rect y="8.500" width="6.500" height="6.500" rx="1"/><rect x="8.500" y="8.500" width="6.500" height="6.500" rx="1"/></svg>
</body>
</html>
